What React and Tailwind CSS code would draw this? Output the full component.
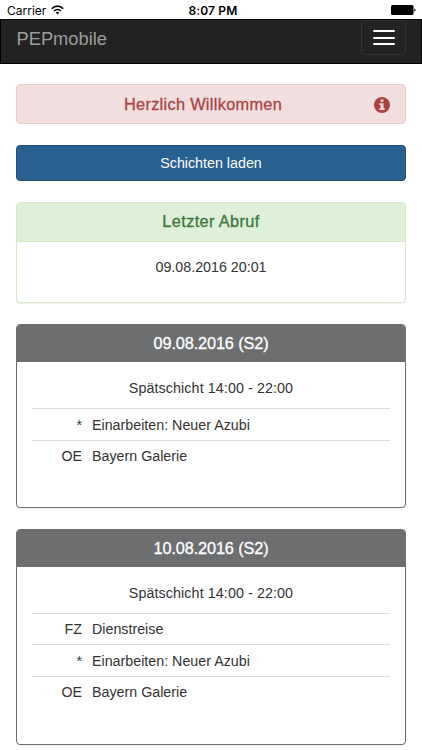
const shifts = [
  {
    title: '09.08.2016 (S2)',
    time: 'Spätschicht 14:00 - 22:00',
    height: 'h-[184px]',
    rows: [
      { code: '*', label: 'Einarbeiten: Neuer Azubi', size: 'h-8 pt-[6px]' },
      { code: 'OE', label: 'Bayern Galerie', size: 'h-8 pt-[5px]' },
    ],
  },
  {
    title: '10.08.2016 (S2)',
    time: 'Spätschicht 14:00 - 22:00',
    height: 'h-[216px]',
    rows: [
      { code: 'FZ', label: 'Dienstreise', size: 'h-[31px] pt-[5px]' },
      { code: '*', label: 'Einarbeiten: Neuer Azubi', size: 'h-8 pt-[6px]' },
      { code: 'OE', label: 'Bayern Galerie', size: 'h-8 pt-[5px]' },
    ],
  },
];

function StatusBar() {
  return (
    <div className="grid h-[19px] shrink-0 grid-cols-3 items-center pt-[3px] pr-[6px] pl-[7px] font-[Inter,sans-serif] text-[12px] leading-4 text-black">
      <div className="flex items-center gap-[5px]">
        <span>Carrier</span>
        <svg className="-mt-[2px] h-[10px] w-[13px]" viewBox="0 0 13 10" fill="none" stroke="currentColor" strokeWidth="1.6">
          <path d="M0.8 3.7C4 0.3 9 0.3 12.2 3.7" />
          <path d="M3 6C5 4 8 4 10 6" />
          <path d="M6.5 9.4L4.6 7.4C5.7 6.4 7.3 6.4 8.4 7.4Z" fill="currentColor" stroke="none" />
        </svg>
      </div>
      <span className="pl-[3px] text-center font-semibold tracking-[0.15px] whitespace-nowrap">8:07 PM</span>
      <svg className="-mt-[2px] h-[10px] w-[25px] justify-self-end" viewBox="0 0 25 10" fill="currentColor">
        <rect x="0" y="0" width="22.5" height="10" rx="1.5" />
        <path d="M23.3 3.4C25 3.7 25 6.3 23.3 6.6Z" />
      </svg>
    </div>
  );
}

function Navbar() {
  return (
    <nav className="flex h-[45px] shrink-0 items-start justify-between border border-black bg-[#222] pr-[15px] pl-[15.5px]">
      <span className="mt-[6px] text-[18.3px] leading-[26px] text-[#9d9d9d]">PEPmobile</span>
      <button className="flex h-[35px] w-[45px] flex-col items-center justify-center gap-[4.5px] rounded border border-[#333]">
        <span className="h-[2px] w-[22px] rounded-[1px] bg-white" />
        <span className="h-[2px] w-[22px] rounded-[1px] bg-white" />
        <span className="h-[2px] w-[22px] rounded-[1px] bg-white" />
      </button>
    </nav>
  );
}

function ShiftCard({ title, time, height, rows }) {
  return (
    <section className={`shrink-0 overflow-hidden rounded-[4px] border border-[#6d6e70] bg-white shadow-[0_1px_1px_rgba(0,0,0,0.05)] ${height}`}>
      <h2 className="h-[37px] bg-[#6d6e70] text-center text-[16.3px] leading-[36px] tracking-[-0.12px] text-white [-webkit-text-stroke:0.3px]">
        {title}
      </h2>
      <p className="h-[46px] pt-[16px] text-center leading-5 tracking-[0.1px]">{time}</p>
      <div className="px-[15px]">
        {rows.map(({ code, label, size }) => (
          <div key={label} className={`flex gap-[10px] border-t border-[#ddd] leading-5 ${size}`}>
            <span className="w-[50px] text-right">{code}</span>
            <span>{label}</span>
          </div>
        ))}
      </div>
    </section>
  );
}

export default function App() {
  return (
    <div className="flex h-[750px] w-[422px] flex-col overflow-hidden bg-white font-['Liberation_Sans',Arial,sans-serif] text-[14.27px] text-[#333]">
      <StatusBar />
      <Navbar />

      <main className="flex flex-col px-4 pt-5">
        {/* Welcome banner */}
        <div className="mb-[21px] flex h-10 items-center rounded-[4px] border border-[#ebccd1] bg-[#f2dede] px-[15px] text-[#a94442]">
          <span className="flex-1 text-center text-[16.3px] leading-5 tracking-[0.32px] [-webkit-text-stroke:0.3px]">
            Herzlich Willkommen
          </span>
          <svg className="mt-px h-4 w-4" viewBox="0 0 16 16">
            <circle cx="8" cy="8" r="8" fill="currentColor" />
            <path d="M6.6 2.6h2.9v2.2H6.6zM5.4 6.2h4.1v5h1.2v1.9H5.4v-1.9h1.2V8.1H5.4z" fill="#f2dede" />
          </svg>
        </div>

        <button className="mb-[21px] h-[36px] rounded-[4px] border border-[#204d74] bg-[#286090] pt-px text-white">
          Schichten laden
        </button>

        {/* Last sync */}
        <section className="mb-[21px] h-[101px] overflow-hidden rounded-[4px] border border-[#d6e9c6] bg-white shadow-[0_1px_1px_rgba(0,0,0,0.05)]">
          <h2 className="h-[39px] border-b border-[#d6e9c6] bg-[#dff0d8] text-center text-[16.3px] leading-[36px] tracking-[0.38px] text-[#3c763d] [-webkit-text-stroke:0.3px]">
            Letzter Abruf
          </h2>
          <p className="pt-[15px] text-center leading-5">09.08.2016 20:01</p>
        </section>

        <div className="flex flex-col gap-[21px]">
          {shifts.map((shift) => (
            <ShiftCard key={shift.title} {...shift} />
          ))}
        </div>
      </main>
    </div>
  );
}
